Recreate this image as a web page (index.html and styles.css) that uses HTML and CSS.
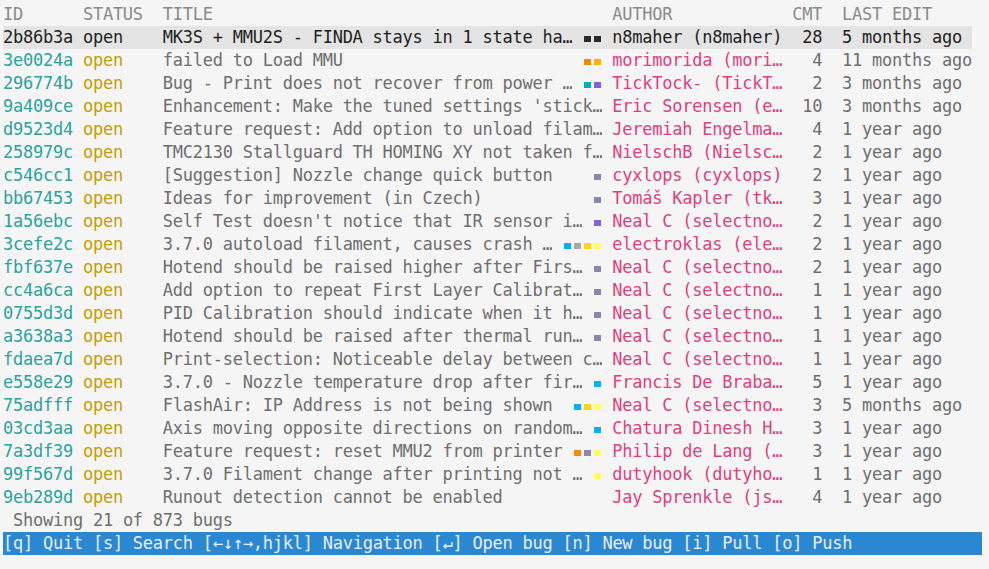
FILE: index.html
```html
<!DOCTYPE html>
<html>
<head>
<meta charset="utf-8">
<link rel="stylesheet" href="styles.css">
</head>
<body>
<div class="screen">
  <div class="table">
    <div class="row head">
      <span class="c-id">ID</span><span class="c-status">STATUS</span><span class="c-title"><span class="t">TITLE</span></span><span class="c-author">AUTHOR</span><span class="c-cmt">CMT</span><span class="c-edit">LAST EDIT</span>
    </div>
    <div class="row sel">
      <span class="c-id">2b86b3a</span><span class="c-status">open</span><span class="c-title"><span class="t">MK3S + MMU2S - FINDA stays in 1 state ha…</span><span class="labels"><i class="lb dk"></i><i class="lb dk"></i></span></span><span class="c-author">n8maher (n8maher)</span><span class="c-cmt">28</span><span class="c-edit">5 months ago</span>
    </div>
    <div class="row">
      <span class="c-id">3e0024a</span><span class="c-status">open</span><span class="c-title"><span class="t">failed to Load MMU</span><span class="labels"><i class="lb or"></i><i class="lb am"></i></span></span><span class="c-author">morimorida (mori…</span><span class="c-cmt">4</span><span class="c-edit">11 months ago</span>
    </div>
    <div class="row">
      <span class="c-id">296774b</span><span class="c-status">open</span><span class="c-title"><span class="t">Bug - Print does not recover from power …</span><span class="labels"><i class="lb te"></i><i class="lb pu"></i></span></span><span class="c-author">TickTock- (TickT…</span><span class="c-cmt">2</span><span class="c-edit">3 months ago</span>
    </div>
    <div class="row">
      <span class="c-id">9a409ce</span><span class="c-status">open</span><span class="c-title"><span class="t">Enhancement: Make the tuned settings 'stick…</span></span><span class="c-author">Eric Sorensen (e…</span><span class="c-cmt">10</span><span class="c-edit">3 months ago</span>
    </div>
    <div class="row">
      <span class="c-id">d9523d4</span><span class="c-status">open</span><span class="c-title"><span class="t">Feature request: Add option to unload filam…</span></span><span class="c-author">Jeremiah Engelma…</span><span class="c-cmt">4</span><span class="c-edit">1 year ago</span>
    </div>
    <div class="row">
      <span class="c-id">258979c</span><span class="c-status">open</span><span class="c-title"><span class="t">TMC2130 Stallguard TH HOMING XY not taken f…</span></span><span class="c-author">NielschB (Nielsc…</span><span class="c-cmt">2</span><span class="c-edit">1 year ago</span>
    </div>
    <div class="row">
      <span class="c-id">c546cc1</span><span class="c-status">open</span><span class="c-title"><span class="t">[Suggestion] Nozzle change quick button</span><span class="labels"><i class="lb gb"></i></span></span><span class="c-author">cyxlops (cyxlops)</span><span class="c-cmt">2</span><span class="c-edit">1 year ago</span>
    </div>
    <div class="row">
      <span class="c-id">bb67453</span><span class="c-status">open</span><span class="c-title"><span class="t">Ideas for improvement (in Czech)</span><span class="labels"><i class="lb gb"></i></span></span><span class="c-author">Tomáš Kapler (tk…</span><span class="c-cmt">3</span><span class="c-edit">1 year ago</span>
    </div>
    <div class="row">
      <span class="c-id">1a56ebc</span><span class="c-status">open</span><span class="c-title"><span class="t">Self Test doesn't notice that IR sensor i…</span><span class="labels"><i class="lb pu"></i></span></span><span class="c-author">Neal C (selectno…</span><span class="c-cmt">2</span><span class="c-edit">1 year ago</span>
    </div>
    <div class="row">
      <span class="c-id">3cefe2c</span><span class="c-status">open</span><span class="c-title"><span class="t">3.7.0 autoload filament, causes crash …</span><span class="labels"><i class="lb bl"></i><i class="lb gr"></i><i class="lb ye"></i><i class="lb ly"></i></span></span><span class="c-author">electroklas (ele…</span><span class="c-cmt">2</span><span class="c-edit">1 year ago</span>
    </div>
    <div class="row">
      <span class="c-id">fbf637e</span><span class="c-status">open</span><span class="c-title"><span class="t">Hotend should be raised higher after Firs…</span><span class="labels"><i class="lb gb"></i></span></span><span class="c-author">Neal C (selectno…</span><span class="c-cmt">2</span><span class="c-edit">1 year ago</span>
    </div>
    <div class="row">
      <span class="c-id">cc4a6ca</span><span class="c-status">open</span><span class="c-title"><span class="t">Add option to repeat First Layer Calibrat…</span><span class="labels"><i class="lb gb"></i></span></span><span class="c-author">Neal C (selectno…</span><span class="c-cmt">1</span><span class="c-edit">1 year ago</span>
    </div>
    <div class="row">
      <span class="c-id">0755d3d</span><span class="c-status">open</span><span class="c-title"><span class="t">PID Calibration should indicate when it h…</span><span class="labels"><i class="lb gb"></i></span></span><span class="c-author">Neal C (selectno…</span><span class="c-cmt">1</span><span class="c-edit">1 year ago</span>
    </div>
    <div class="row">
      <span class="c-id">a3638a3</span><span class="c-status">open</span><span class="c-title"><span class="t">Hotend should be raised after thermal run…</span><span class="labels"><i class="lb gb"></i></span></span><span class="c-author">Neal C (selectno…</span><span class="c-cmt">1</span><span class="c-edit">1 year ago</span>
    </div>
    <div class="row">
      <span class="c-id">fdaea7d</span><span class="c-status">open</span><span class="c-title"><span class="t">Print-selection: Noticeable delay between c…</span></span><span class="c-author">Neal C (selectno…</span><span class="c-cmt">1</span><span class="c-edit">1 year ago</span>
    </div>
    <div class="row">
      <span class="c-id">e558e29</span><span class="c-status">open</span><span class="c-title"><span class="t">3.7.0 - Nozzle temperature drop after fir…</span><span class="labels"><i class="lb bl"></i></span></span><span class="c-author">Francis De Braba…</span><span class="c-cmt">5</span><span class="c-edit">1 year ago</span>
    </div>
    <div class="row">
      <span class="c-id">75adfff</span><span class="c-status">open</span><span class="c-title"><span class="t">FlashAir: IP Address is not being shown</span><span class="labels"><i class="lb bl"></i><i class="lb ye"></i><i class="lb ly"></i></span></span><span class="c-author">Neal C (selectno…</span><span class="c-cmt">3</span><span class="c-edit">5 months ago</span>
    </div>
    <div class="row">
      <span class="c-id">03cd3aa</span><span class="c-status">open</span><span class="c-title"><span class="t">Axis moving opposite directions on random…</span><span class="labels"><i class="lb bl"></i></span></span><span class="c-author">Chatura Dinesh H…</span><span class="c-cmt">3</span><span class="c-edit">1 year ago</span>
    </div>
    <div class="row">
      <span class="c-id">7a3df39</span><span class="c-status">open</span><span class="c-title"><span class="t">Feature request: reset MMU2 from printer</span><span class="labels"><i class="lb or"></i><i class="lb gb"></i><i class="lb ly"></i></span></span><span class="c-author">Philip de Lang (…</span><span class="c-cmt">3</span><span class="c-edit">1 year ago</span>
    </div>
    <div class="row">
      <span class="c-id">99f567d</span><span class="c-status">open</span><span class="c-title"><span class="t">3.7.0 Filament change after printing not …</span><span class="labels"><i class="lb ly"></i></span></span><span class="c-author">dutyhook (dutyho…</span><span class="c-cmt">1</span><span class="c-edit">1 year ago</span>
    </div>
    <div class="row">
      <span class="c-id">9eb289d</span><span class="c-status">open</span><span class="c-title"><span class="t">Runout detection cannot be enabled</span></span><span class="c-author">Jay Sprenkle (js…</span><span class="c-cmt">4</span><span class="c-edit">1 year ago</span>
    </div>
  </div>
  <div class="summary"><span class="txt"> Showing 21 of 873 bugs</span></div>
  <div class="footer"><span class="txt">[q] Quit [s] Search [←↓↑→,hjkl] Navigation [↵] Open bug [n] New bug [i] Pull [o] Push</span></div>
</div>
</body>
</html>
```

FILE: styles.css
```css
:root {
  --cw: 9.99px;
  --lh: 23px;
}
html, body {
  margin: 0;
  padding: 0;
  background: #f5f5f5;
}
.screen {
  padding: 3px;
  font-family: "DejaVu Sans Mono", monospace;
  font-size: 17px;
  letter-spacing: -0.245px;
  line-height: var(--lh);
  color: #6e6e6e;
}
.row {
  display: flex;
  height: var(--lh);
  width: calc(var(--cw) * 97);
}
.row span, .txt { white-space: pre; }
.row > span { overflow: hidden; flex: none; }
.c-id { width: calc(var(--cw) * 8); color: #2ba39c; }
.c-status { width: calc(var(--cw) * 8); color: #c59d00; }
.c-title { width: calc(var(--cw) * 44); display: flex; }
.c-title .t { overflow: hidden; }
.labels { margin-left: auto; display: flex; }
.c-author { width: calc(var(--cw) * 17); margin-left: var(--cw); color: #df3f7f; }
.c-cmt { width: calc(var(--cw) * 3); margin-left: var(--cw); text-align: right; }
.c-edit { margin-left: calc(var(--cw) * 2); }

.head span { color: #8a8a8a; }
.sel { background: #e4e4e4; }
.sel span { color: #1e1e1e; }

.lb {
  width: var(--cw);
  height: var(--lh);
  display: flex;
  align-items: center;
  justify-content: center;
}
.lb::before {
  content: "";
  width: 7px;
  height: 6px;
  margin-top: 3px;
  background: currentColor;
}
.lb.dk { color: #2a2a2a; }
.lb.or { color: #ff8700; }
.lb.am { color: #ffaf00; }
.lb.te { color: #00afaf; }
.lb.pu { color: #875fd7; }
.lb.gb { color: #8787af; }
.lb.bl { color: #00afff; }
.lb.gr { color: #a8a8a8; }
.lb.ye { color: #ffd700; }
.lb.ly { color: #ffff5f; }

.summary { height: var(--lh); }
.footer {
  height: var(--lh);
  width: calc(var(--cw) * 98);
  background: #2a88d3;
  color: #e8eef4;
}
```
